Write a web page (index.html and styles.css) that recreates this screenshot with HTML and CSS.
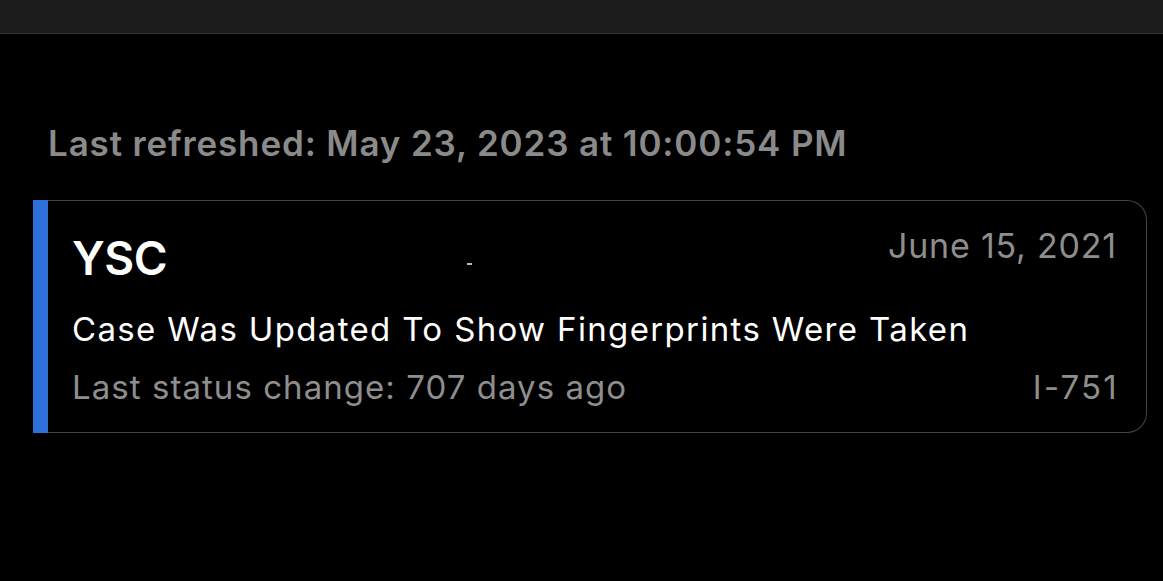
FILE: index.html
```html
<!DOCTYPE html>
<html>
<head>
<meta charset="utf-8">
<link rel="stylesheet" href="styles.css">
</head>
<body>
<div class="topbar"></div>
<main class="content">
  <div class="refreshed">Last refreshed: May 23, 2023 at 10:00:54 PM</div>
  <div class="card">
    <div class="accent"></div>
    <div class="card-body">
      <div class="row row-top">
        <div class="title">YSC<span class="dash"></span></div>
        <div class="date">June 15, 2021</div>
      </div>
      <div class="status">Case Was Updated To Show Fingerprints Were Taken</div>
      <div class="row row-bottom">
        <div class="meta">Last status change: 707 days ago</div>
        <div class="meta form">I-751</div>
      </div>
    </div>
  </div>
</main>
</body>
</html>
```

FILE: styles.css
```css
html, body {
  margin: 0;
  padding: 0;
  background: #000;
  font-family: Inter, "Noto Sans", sans-serif;
}
.topbar {
  height: 33px;
  background: #1b1b1b;
  border-bottom: 1px solid #333;
}
.content {
  padding: 87px 16px 0 33px;
}
.refreshed {
  margin-left: 15px;
  color: #8a8a8a;
  font-size: 35px;
  font-weight: 600;
  letter-spacing: 0.85px;
  line-height: 44px;
}
.card {
  display: flex;
  margin-top: 35px;
  height: 233px;
}
.accent {
  width: 15px;
  background: #2f6fdc;
}
.card-body {
  flex: 1;
  border: 1.5px solid #444;
  border-left: none;
  border-radius: 0 20px 20px 0;
  padding: 26px 29px 0 24px;
  display: flex;
  flex-direction: column;
}
.row {
  display: flex;
  justify-content: space-between;
  align-items: flex-start;
}
.title {
  color: #fff;
  font-size: 46px;
  font-weight: 600;
  letter-spacing: -0.5px;
  line-height: 62px;
  display: flex;
  align-items: flex-start;
}
.dash {
  display: inline-block;
  width: 5px;
  height: 2px;
  background: #bbb;
  margin: 36px 0 0 300px;
}
.date {
  color: #8e8e8e;
  font-size: 34px;
  letter-spacing: 0.8px;
  line-height: 44px;
  margin-top: -3px;
}
.status {
  color: #fff;
  font-size: 33px;
  letter-spacing: 1.35px;
  line-height: 44px;
  margin-top: 18px;
}
.row-bottom {
  margin-top: 14px;
}
.meta {
  color: #8e8e8e;
  font-size: 33px;
  letter-spacing: 1.05px;
  line-height: 44px;
}
.form {
  letter-spacing: 2.2px;
  margin-right: -2px;
}
```
